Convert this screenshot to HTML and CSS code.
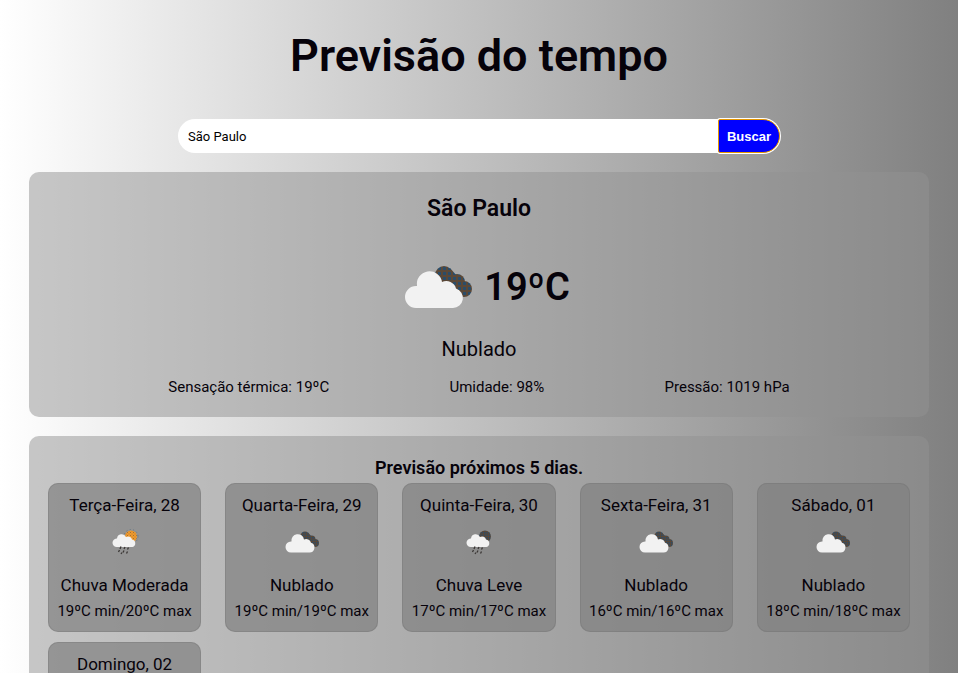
FILE: index.html
```html
<!DOCTYPE html>
<html lang="pt-BR">
<head>
<meta charset="utf-8">
<meta name="viewport" content="width=device-width, initial-scale=1">
<title>Previsão do tempo</title>
<link rel="stylesheet" href="styles.css">
</head>
<body>
<svg class="sprite" aria-hidden="true">
  <defs>
    <pattern id="dark" width="5" height="5" patternUnits="userSpaceOnUse">
      <rect width="5" height="5" fill="#5a4838"/>
      <rect width="3" height="3" fill="#2b4c68"/>
    </pattern>
    <pattern id="sun" width="6" height="6" patternUnits="userSpaceOnUse">
      <rect width="6" height="6" fill="#f09a2c"/>
      <rect width="2" height="2" fill="#a07038"/>
      <rect x="3" y="3" width="2" height="2" fill="#b87a34"/>
    </pattern>
  </defs>
  <symbol id="clouds" viewBox="0 0 100 100">
    <g fill="url(#dark)"><circle cx="56" cy="38" r="9"/><circle cx="69" cy="45" r="8"/><circle cx="76" cy="52" r="8"/><path d="M50 44 62 31 83 55 70 60Z"/></g>
    <path d="M28 71a11 11 0 0 1 0-22h1a12.500 12.500 0 0 1 25-4 10 10 0 0 1 14 6.500 10 10 0 0 1-3 19.500Z" fill="#f2f2f2"/>
  </symbol>
  <symbol id="shower" viewBox="0 0 100 100">
    <path d="M34 60a8.500 8.500 0 0 1-1-17h1a9.500 9.500 0 0 1 18-3 8 8 0 0 1 12 5 7.700 7.700 0 0 1 1 15Z" fill="#f2f2f2"/>
    <path d="M42 59l-2 5M50 60l-2 4M57 61l-2 4M39 66l-2 4M48 67l-2 4M55 69l-2 4M44 71l-2 3" stroke="#3b3735" stroke-width="2.600"/>
  </symbol>
</svg>
<main class="page">
  <h1 class="title">Previsão do tempo</h1>
  <form class="search">
    <input class="search-input" type="text" value="São Paulo" aria-label="Cidade">
    <button class="search-button" type="button">Buscar</button>
  </form>

  <section class="panel current">
    <h2 class="city">São Paulo</h2>
    <div class="reading">
      <svg class="icon-large" aria-hidden="true"><use href="#clouds"/></svg>
      <p class="temperature">19ºC</p>
    </div>
    <p class="condition">Nublado</p>
    <div class="details">
      <p>Sensação térmica: 19ºC</p>
      <p>Umidade: 98%</p>
      <p>Pressão: 1019 hPa</p>
    </div>
  </section>

  <section class="panel forecast">
    <h3 class="forecast-title">Previsão próximos 5 dias.</h3>
    <div class="days">
      <article class="day">
        <p>Terça-Feira, 28</p>
        <svg class="icon-small" viewBox="0 0 100 100" aria-hidden="true"><circle cx="62" cy="39" r="14" fill="none" stroke="#5f7585" stroke-width="2" stroke-dasharray="2 5"/><circle cx="62" cy="39" r="12" fill="url(#sun)"/><use href="#shower"/></svg>
        <p>Chuva Moderada</p>
        <p class="range">19ºC min/20ºC max</p>
      </article>
      <article class="day">
        <p>Quarta-Feira, 29</p>
        <svg class="icon-small" aria-hidden="true"><use href="#clouds"/></svg>
        <p>Nublado</p>
        <p class="range">19ºC min/19ºC max</p>
      </article>
      <article class="day">
        <p>Quinta-Feira, 30</p>
        <svg class="icon-small" viewBox="0 0 100 100" aria-hidden="true"><circle cx="62" cy="39" r="12" fill="url(#dark)"/><use href="#shower"/></svg>
        <p>Chuva Leve</p>
        <p class="range">17ºC min/17ºC max</p>
      </article>
      <article class="day">
        <p>Sexta-Feira, 31</p>
        <svg class="icon-small" aria-hidden="true"><use href="#clouds"/></svg>
        <p>Nublado</p>
        <p class="range">16ºC min/16ºC max</p>
      </article>
      <article class="day">
        <p>Sábado, 01</p>
        <svg class="icon-small" aria-hidden="true"><use href="#clouds"/></svg>
        <p>Nublado</p>
        <p class="range">18ºC min/18ºC max</p>
      </article>
      <article class="day">
        <p>Domingo, 02</p>
      </article>
    </div>
  </section>
</main>
</body>
</html>
```
FILE: styles.css
```css
* {
  box-sizing: border-box;
  margin: 0;
  padding: 0;
}

html {
  height: 100%;
  overflow: hidden;
}

body {
  min-height: 100%;
  background: linear-gradient(to right, #fff, #808080);
  color: #06020a;
  font-family: Roboto, "Liberation Sans", sans-serif;
}

.sprite {
  position: absolute;
  width: 0;
  height: 0;
}

.page {
  max-width: 900px;
  margin: 0 auto;
  padding-top: 26px;
  text-align: center;
}

.title {
  font-size: 45px;
  line-height: 60px;
  font-weight: 600;
}

.search {
  display: flex;
  max-width: 602px;
  height: 34px;
  margin: 33px auto 19px;
}

.search-input {
  flex: 1;
  min-width: 0;
  padding: 0 10px;
  border: 0;
  border-radius: 17px 0 0 17px;
  background: #fff;
  color: #000;
  font: 13px Roboto, sans-serif;
}

.search-button {
  width: 62px;
  border: 1px solid #e59700;
  border-radius: 2px 17px 17px 2px;
  background: #00f;
  box-shadow: 0 0 0 1px #fff;
  color: #fff;
  font: bold 13px "Liberation Sans", sans-serif;
}

.panel {
  margin-bottom: 19px;
  padding: 19px 19px 20px;
  border-radius: 10px;
  background: rgba(146, 146, 146, 0.5);
}

.city {
  font-size: 23px;
  line-height: 36px;
  font-weight: 600;
}

.reading {
  display: flex;
  align-items: center;
  justify-content: center;
  height: 100px;
  margin-top: 10px;
}

.icon-large {
  width: 100px;
  height: 100px;
  margin-right: -4px;
}

.temperature {
  font-size: 38px;
  font-weight: 600;
}

.condition {
  font-size: 20px;
  line-height: 24px;
}

.details {
  display: flex;
  justify-content: space-evenly;
  margin-top: 16px;
  font-size: 15px;
  line-height: 20px;
}

.forecast-title {
  margin-bottom: 2px;
  font-size: 18px;
  line-height: 26px;
  font-weight: 600;
}

.days {
  display: grid;
  grid-template-columns: repeat(5, 1fr);
  gap: 10px 24px;
}

.day {
  min-height: 148px;
  padding: 10px 0 9px;
  border-radius: 10px;
  background: rgba(128, 128, 128, 0.7);
  box-shadow: inset 0 0 0 1px rgba(110, 110, 110, 0.3);
  font-size: 17px;
  line-height: 24px;
}

.icon-small {
  display: block;
  width: 50px;
  height: 50px;
  margin: 0 auto 6px;
}

.range {
  margin-top: 2px;
  font-size: 15px;
}
```
